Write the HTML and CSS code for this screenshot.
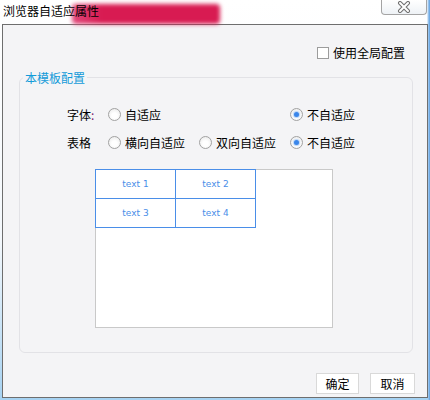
FILE: index.html
```html
<!DOCTYPE html>
<html lang="zh-CN">
<head>
    <meta charset="UTF-8">
    <link rel="stylesheet" href="styles.css">
    <title>浏览器自适应属性</title>
</head>
<body>
    <div class="titlebar">
        <div class="glow"></div>
        <span class="title">浏览器自适应属性</span>
        <button class="close" title="关闭">
            <svg width="14" height="12" viewBox="0 0 14 12">
                <path d="M3 2 L11 10 M11 2 L3 10" stroke="#6f6f6f" stroke-width="4" stroke-linecap="round"/>
                <path d="M3 2 L11 10 M11 2 L3 10" stroke="#fff" stroke-width="2" stroke-linecap="round"/>
            </svg>
        </button>
    </div>

    <div class="client">
        <!-- global switch -->
        <div class="global">
            <span class="check"></span>
            <span>使用全局配置</span>
        </div>

        <fieldset class="template">
            <legend>本模板配置</legend>

            <div class="options">
                <span class="label">字体<i>:</i></span>
                <label class="radio"><span class="dot"></span>自适应</label>
                <span></span>
                <label class="radio on"><span class="dot"></span>不自适应</label>

                <span class="label">表格</span>
                <label class="radio"><span class="dot"></span>横向自适应</label>
                <label class="radio"><span class="dot"></span>双向自适应</label>
                <label class="radio on"><span class="dot"></span>不自适应</label>
            </div>

            <div class="preview">
                <table>
                    <tr><td>text 1</td><td>text 2</td></tr>
                    <tr><td>text 3</td><td>text 4</td></tr>
                </table>
            </div>
        </fieldset>

        <div class="actions">
            <button class="btn ok">确定</button>
            <button class="btn cancel">取消</button>
        </div>
    </div>
</body>
</html>
```

FILE: styles.css
```css
* {
    margin: 0;
    padding: 0;
    box-sizing: border-box;
}

body {
    width: 430px;
    height: 400px;
    overflow: hidden;
    font-family: "Noto Sans CJK SC", "Liberation Sans", sans-serif;
    font-size: 12px;
    color: #000;
    background:
        linear-gradient(to left, #5d9fe0 0, #a9cdf0 2px, transparent 3px),
        linear-gradient(to bottom, #ffffff 0%, #f4f8fc 60%, #a6d2f2 100%);
}

.titlebar {
    position: relative;
    height: 24px;
    display: flex;
    align-items: flex-start;
}

.glow {
    position: absolute;
    left: 72px;
    top: 4px;
    width: 148px;
    height: 20px;
    background: linear-gradient(to right, #e0487a, #d81b52 20%);
    border-radius: 4px;
    filter: blur(2px);
}

.title {
    position: relative;
    padding: 3px 0 0 3px;
    line-height: 15px;
}

.close {
    margin-left: auto;
    margin-right: 3px;
    width: 46px;
    height: 15px;
    border: 1px solid #a4a4a4;
    border-top: none;
    border-radius: 0 0 4px 4px;
    background: linear-gradient(#ffffff, #eef2f6);
    display: flex;
    align-items: center;
    justify-content: center;
}

.client {
    margin: 0 2px 0 2px;
    width: 426px;
    height: 374px;
    border: 1px solid #6e6e6e;
    background: #f4f4f6;
}

.global {
    display: flex;
    justify-content: flex-end;
    align-items: center;
    gap: 4px;
    margin-top: 21px;
    padding-right: 22px;
    line-height: 14px;
}

.check {
    width: 12px;
    height: 12px;
    border: 1px solid #9c9c9c;
    background: #fff;
}

.template {
    margin: 11px 14px 0 16px;
    padding: 0 0 24px 0;
    border: 1px solid #e2e2e6;
    border-radius: 6px;
    min-width: 0;
}

.template legend {
    margin-left: 3px;
    padding: 0 2px;
    font-size: 12px;
    line-height: 13px;
    color: #139bd9;
}

.options {
    display: grid;
    grid-template-columns: 41px 91px 91px auto;
    grid-auto-rows: 28px;
    align-items: center;
    padding: 16px 0 0 47px;
}

.label i {
    font-style: normal;
    color: #7a1f6e;
}

.radio {
    display: flex;
    align-items: center;
    gap: 4px;
}

.radio .dot {
    width: 13px;
    height: 13px;
    border-radius: 50%;
    border: 1px solid #a2a2a2;
    background: radial-gradient(circle at 50% 60%, #ffffff 30%, #e6e6e6 100%);
    display: flex;
    align-items: center;
    justify-content: center;
}

.radio.on .dot::after {
    content: "";
    width: 5px;
    height: 5px;
    border-radius: 50%;
    background: #3a86ea;
    box-shadow: 0 0 1px 1px #b9d4f6;
}

.preview {
    margin: 13px 0 0 75px;
    width: 238px;
    height: 159px;
    border: 1px solid #c9c9c9;
    background: #fff;
}

.preview table {
    margin: -1px 0 0 -1px;
    border-collapse: collapse;
}

.preview td {
    width: 80px;
    height: 29px;
    border: 1px solid #4a8ee8;
    text-align: center;
    font-family: "DejaVu Sans", sans-serif;
    font-size: 9px;
    color: #4a8ee8;
}

.actions {
    display: flex;
    justify-content: flex-end;
    gap: 11px;
    margin-top: 20px;
    padding-right: 12px;
}

.btn {
    height: 21px;
    border: 1px solid #d9d9d9;
    background: #fff;
    font-family: inherit;
    font-size: 12px;
    color: #000;
}

.btn.ok {
    width: 43px;
}

.btn.cancel {
    width: 45px;
}
```
